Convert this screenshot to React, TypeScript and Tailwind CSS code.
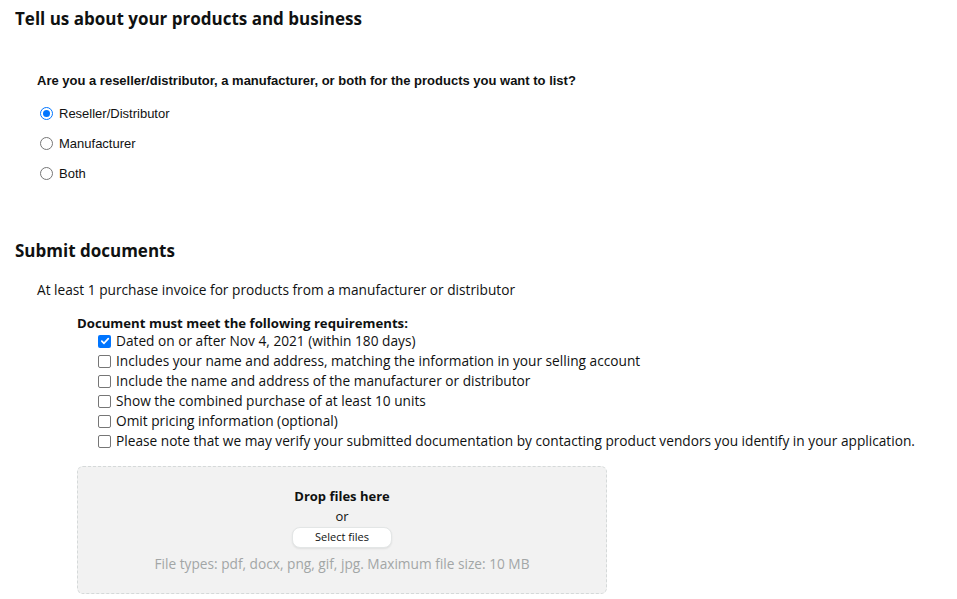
import React from "react";

const requirements = [
  { label: "Dated on or after Nov 4, 2021 (within 180 days)", checked: true },
  { label: "Includes your name and address, matching the information in your selling account", checked: false },
  { label: "Include the name and address of the manufacturer or distributor", checked: false },
  { label: "Show the combined purchase of at least 10 units", checked: false },
  { label: "Omit pricing information (optional)", checked: false },
  {
    label:
      "Please note that we may verify your submitted documentation by contacting product vendors you identify in your application.",
    checked: false,
  },
];

const roles = ["Reseller/Distributor", "Manufacturer", "Both"];

const Radio: React.FC<{ checked: boolean }> = ({ checked }) => (
  <span
    className={`flex h-[13px] w-[13px] shrink-0 items-center justify-center rounded-full border ${
      checked ? "border-[#0075ff]" : "border-[#767676]"
    } bg-white`}
  >
    {checked && <span className="h-[7px] w-[7px] rounded-full bg-[#0075ff]" />}
  </span>
);

const Checkbox: React.FC<{ checked: boolean }> = ({ checked }) =>
  checked ? (
    <span className="flex h-[13px] w-[13px] shrink-0 items-center justify-center rounded-[2px] bg-[#0075ff]">
      <svg width="10" height="10" viewBox="0 0 10 10" fill="none">
        <path d="M1.8 5.2 L4 7.3 L8.3 2.6" stroke="white" strokeWidth="1.7" strokeLinecap="round" strokeLinejoin="round" />
      </svg>
    </span>
  ) : (
    <span className="h-[13px] w-[13px] shrink-0 rounded-[2px] border border-[#767676] bg-white" />
  );

export default function App() {
  return (
    <div className="min-h-[599px] w-[957px] bg-white pl-[15px] pt-[8px] text-[#0f1111]">
      <h2 className="font-['Open_Sans',sans-serif] text-[17px] font-bold leading-[22px]">
        Tell us about your products and business
      </h2>

      <div className="pl-[22px] pt-[42px]">
        <p className="font-['Liberation_Sans',Arial,sans-serif] text-[13px] font-bold leading-[18px]">
          Are you a reseller/distributor, a manufacturer, or both for the products you want to list?
        </p>
        <div className="mt-[16px] flex flex-col gap-[15px] pl-[3px]">
          {roles.map((r, i) => (
            <label key={r} className="flex h-[15px] items-center gap-[6px] font-['Liberation_Sans',Arial,sans-serif] text-[13px] text-[#111]">
              <Radio checked={i === 0} />
              {r}
            </label>
          ))}
        </div>
      </div>

      <h2 className="mt-[59px] font-['Open_Sans',sans-serif] text-[17px] font-bold leading-[22px]">
        Submit documents
      </h2>

      <div className="pl-[22px] pt-[18px] font-['Open_Sans',sans-serif] text-[13.7px] text-[#0f1111]">
        <p className="leading-[20px]">At least 1 purchase invoice for products from a manufacturer or distributor</p>

        <div className="mt-[15px] pl-[40px]">
          <p className="text-[13.2px] font-bold leading-[16px]">Document must meet the following requirements:</p>
          <ul className="pl-[21px]">
            {requirements.map((r) => (
              <li key={r.label} className="flex h-[20px] items-center gap-[5px]">
                <Checkbox checked={r.checked} />
                <span>{r.label}</span>
              </li>
            ))}
          </ul>

          <div className="mt-[15px] flex h-[128px] w-[530px] flex-col items-center justify-center rounded-[6px] border border-dashed border-[#d5d9d9] bg-[#f2f2f2] font-['Open_Sans',sans-serif]">
            <p className="text-[13px] font-bold leading-[20px] text-[#0f1111]">Drop files here</p>
            <p className="text-[13px] leading-[20px] text-[#0f1111]">or</p>
            <button className="mt-[1px] h-[21px] w-[100px] rounded-[8px] border border-[#e3e6e6] bg-white text-[11px] text-[#0f1111] shadow-[0_1px_2px_rgba(0,0,0,0.08)]">
              Select files
            </button>
            <p className="mt-[6px] text-[13.7px] leading-[20px] text-[#a2a6a6]">
              File types: pdf, docx, png, gif, jpg. Maximum file size: 10 MB
            </p>
          </div>
        </div>
      </div>
    </div>
  );
}
